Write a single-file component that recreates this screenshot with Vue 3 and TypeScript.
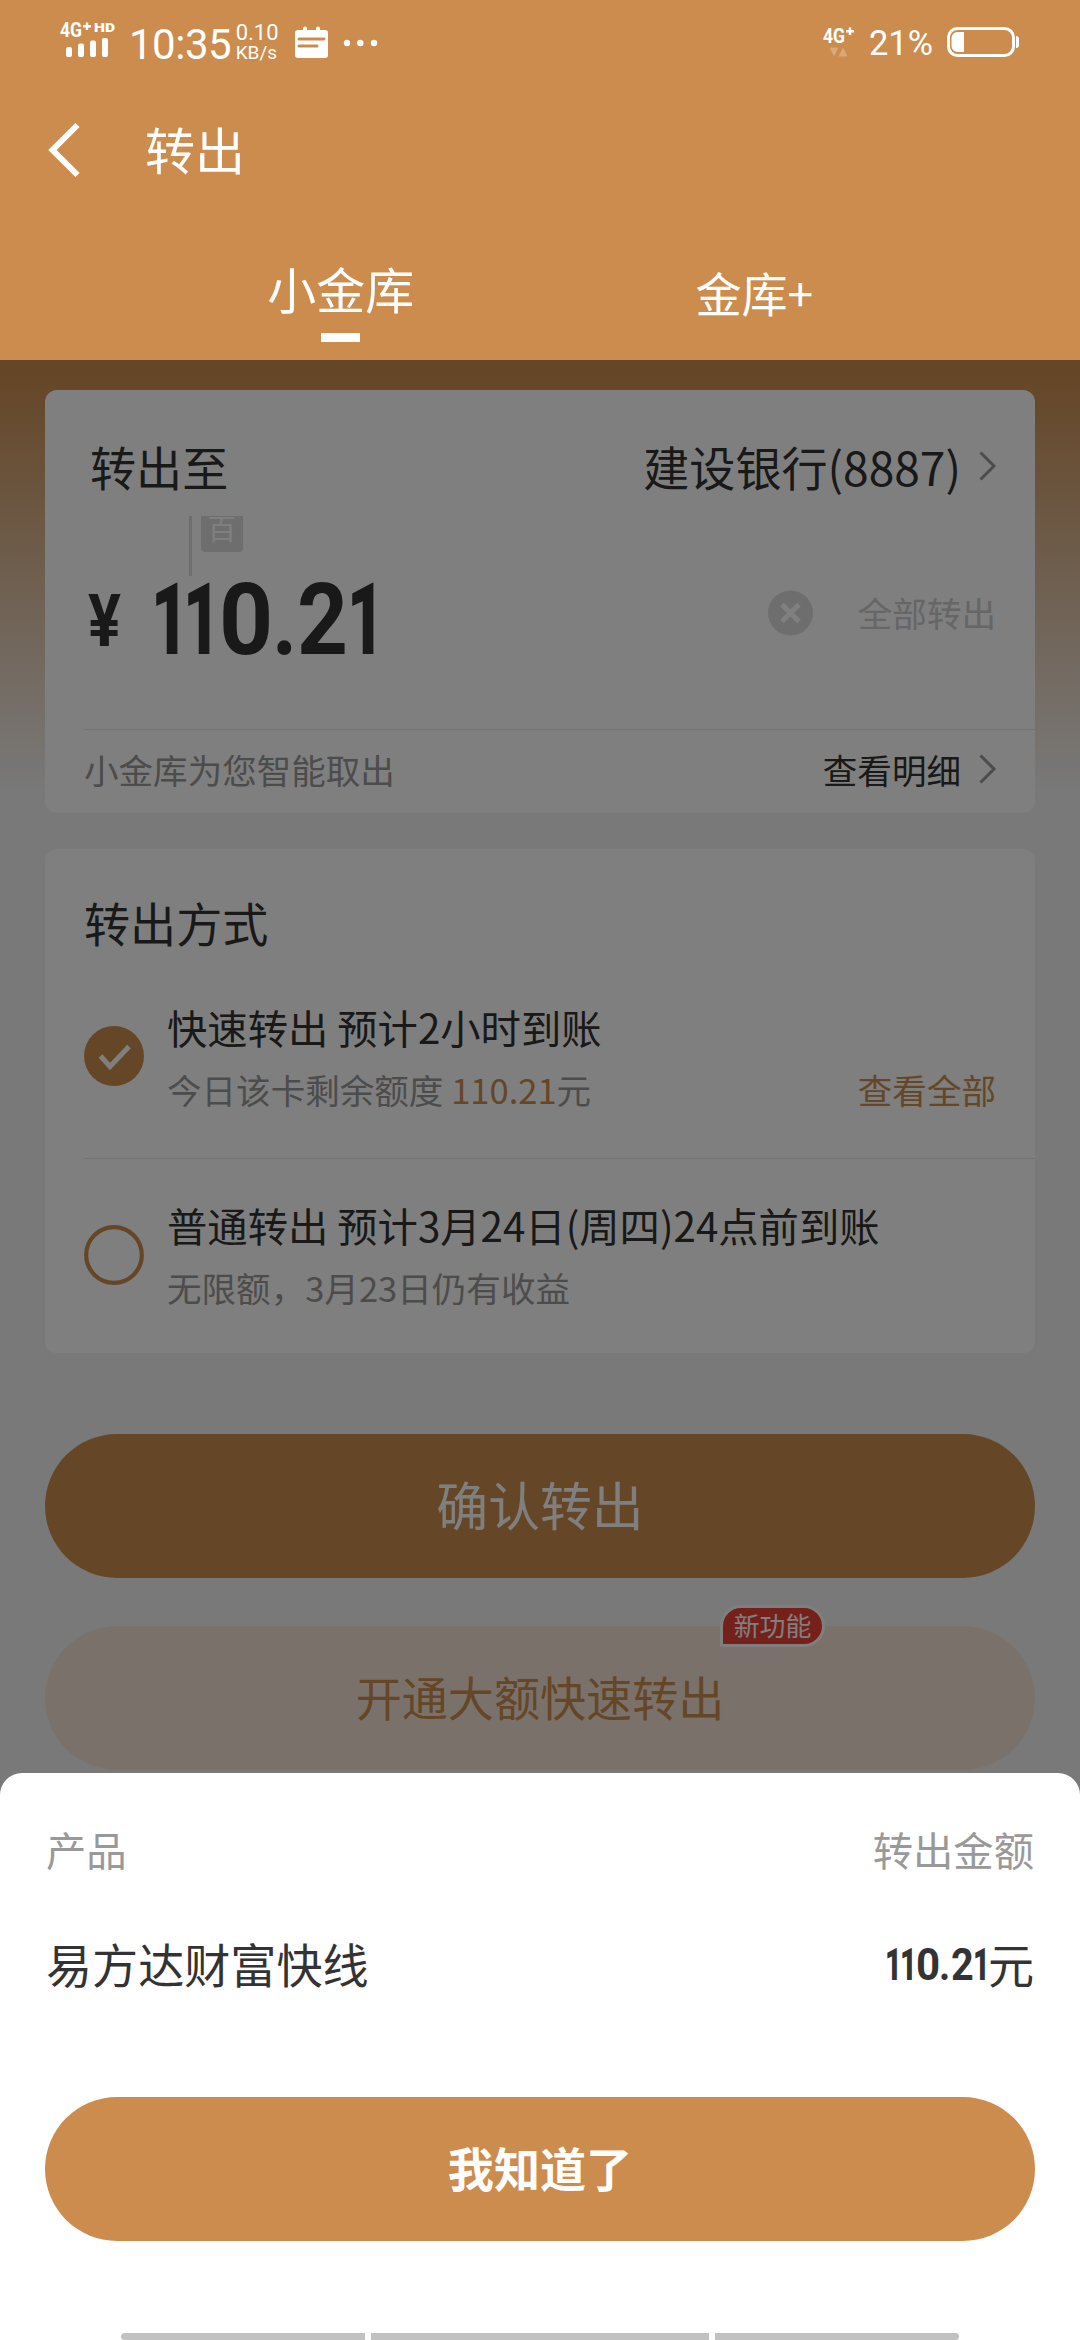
<script setup lang="ts">
import { ref } from 'vue'

interface Tab { key: string; label: string }
interface Method { key: string; title: string; before: string; amount?: string; after?: string; link?: string }

const tabs: Tab[] = [
  { key: 'vault', label: '小金库' },
  { key: 'plus', label: '金库+' },
]
const activeTab = ref('vault')

const methods: Method[] = [
  { key: 'fast', title: '快速转出 预计2小时到账', before: '今日该卡剩余额度 ', amount: '110.21', after: '元', link: '查看全部' },
  { key: 'normal', title: '普通转出 预计3月24日(周四)24点前到账', before: '无限额，3月23日仍有收益' },
]
const selected = ref('fast')

// Each character of the amount carries its own advance and condensing class.
const digits = '110.21'.split('').map((ch, i) => ({ ch, cls: ['d1', 'd1 wide', 'd0', 'dot', 'd2', 'd1 last'][i] }))
</script>

<template>
  <div class="screen">
    <header class="header">
      <div class="status">
        <svg class="signal" width="60" height="40" viewBox="0 0 60 40">
          <text x="1" y="16.500" class="net" textLength="22" lengthAdjust="spacingAndGlyphs">4G</text>
          <path d="M28 2.500v7.500M24 6.200h8" stroke="#fff" stroke-width="2.400" />
          <text x="35" y="12" class="hd" textLength="21" lengthAdjust="spacingAndGlyphs">HD</text>
          <rect x="7" y="27" width="6" height="10" rx="2" />
          <rect x="19" y="23.500" width="6" height="13.500" rx="2" />
          <rect x="31" y="20.500" width="6" height="16.500" rx="2" />
          <rect x="43" y="18" width="6" height="19" rx="2" />
        </svg>
        <span class="time">10:35</span>
        <span class="speed"><span class="rate">0.10</span><span class="unit">KB/s</span></span>
        <svg class="calendar" width="34" height="34" viewBox="0 0 34 34">
          <path fill="#fff" fill-rule="evenodd" d="M3 4h5V2.500a2 2 0 0 1 4 0V4h9V2.500a2 2 0 0 1 4 0V4h5a3 3 0 0 1 3 3v22a3 3 0 0 1-3 3H3a3 3 0 0 1-3-3V7a3 3 0 0 1 3-3zM4 11.500a1.500 1.500 0 0 0 0 3h25a1.500 1.500 0 0 0 0-3zM4 18.500a1.500 1.500 0 0 0 0 3h18a1.500 1.500 0 0 0 0-3z" />
        </svg>
        <svg class="dots" width="36" height="8" viewBox="0 0 36 8">
          <circle cx="4" cy="4" r="3.200" /><circle cx="17.300" cy="4" r="3.200" /><circle cx="31" cy="4" r="3.200" />
        </svg>
        <svg class="network" width="36" height="32" viewBox="0 0 36 32">
          <text x="1" y="16.500" class="net" textLength="22" lengthAdjust="spacingAndGlyphs">4G</text>
          <path d="M28 1.500v7.500M24 5.200h8" stroke="#fff" stroke-width="2.400" />
          <path d="M7.500 21.500h9l-4.500 9zM16.500 30.500h9l-4.500-9z" fill="#fff" opacity=".25" />
        </svg>
        <span class="percent">21%</span>
        <svg class="battery" width="73" height="30" viewBox="0 0 73 30">
          <rect x="1.500" y="1.500" width="65" height="27" rx="9" fill="none" stroke="#fff" stroke-width="3" />
          <path d="M10.500 5H17v20h-6.500a6 6 0 0 1-6-6v-8a6 6 0 0 1 6-6zM69 9a3 3 0 0 1 3 3v6a3 3 0 0 1-3 3z" />
        </svg>
      </div>
      <div class="titlebar">
        <svg width="34" height="56" viewBox="0 0 34 56"><path d="M30.500 3L5.500 28l25 25" fill="none" stroke="#fff" stroke-width="6" /></svg>
        <h1>转出</h1>
      </div>
      <nav class="tabs">
        <button v-for="t in tabs" :key="t.key" :class="['tab', { active: t.key === activeTab }]" @click="activeTab = t.key">{{ t.label }}</button>
      </nav>
    </header>

    <main class="body">
      <section class="card">
        <div class="row target">
          <span class="big">转出至</span>
          <span class="link big">建设银行(8887)<svg width="18" height="30" viewBox="0 0 18 30"><path d="M1.500 1.500L15 15 1.500 28.500" /></svg></span>
        </div>
        <div class="hint"><i></i><span><b>百</b></span></div>
        <div class="row amount">
          <svg width="67" height="90" viewBox="0 0 67 90">
            <text class="yen" x="4" y="70" textLength="33" lengthAdjust="spacingAndGlyphs">¥</text>
          </svg>
          <span class="digits"><span v-for="(d, i) in digits" :key="i" :class="d.cls">{{ d.ch }}</span></span>
          <svg class="clear" width="45" height="46" viewBox="0 0 45 46"><circle cx="22.500" cy="23" r="22.500" fill="#dcdcdc" /><path d="M14 14.500l17 17M31 14.500l-17 17" stroke="#fff" stroke-width="5" /></svg>
          <span class="small all">全部转出</span>
        </div>
        <div class="row detail small">
          <span class="muted">小金库为您智能取出</span>
          <span class="link">查看明细<svg width="18" height="30" viewBox="0 0 18 30"><path d="M1.500 1.500L15 15 1.500 28.500" /></svg></span>
        </div>
      </section>

      <section class="card methods">
        <h2 class="big">转出方式</h2>
        <div v-for="m in methods" :key="m.key" class="method" @click="selected = m.key">
          <svg width="60" height="60" viewBox="0 0 60 60">
            <template v-if="selected === m.key">
              <circle cx="30" cy="30" r="30" fill="#cb8c4d" />
              <path d="M16.500 30l9.500 10.500L45 20.500" fill="none" stroke="#fff" stroke-width="5" />
            </template>
            <circle v-else cx="30" cy="30" r="27.800" fill="none" stroke="#cb8c4d" stroke-width="4.200" />
          </svg>
          <div class="texts">
            <div class="name">{{ m.title }}</div>
            <div class="row small muted">
              <span>{{ m.before }}<em v-if="m.amount">{{ m.amount }}</em>{{ m.after }}</span>
              <em v-if="m.link">{{ m.link }}</em>
            </div>
          </div>
        </div>
      </section>

      <button class="btn primary">确认转出</button>
      <button class="btn secondary">开通大额快速转出<span class="badge">新功能</span></button>
      <div class="mask"></div>
    </main>

    <section class="sheet">
      <div class="row head"><span>产品</span><span>转出金额</span></div>
      <div class="row item">
        <span>易方达财富快线</span>
        <span class="sum"><span class="digits"><span v-for="(d, i) in digits" :key="i" :class="d.cls">{{ d.ch }}</span></span><span class="yuan">元</span></span>
      </div>
      <button class="btn confirm">我知道了</button>
      <div class="gesture"><i></i><i></i><i></i></div>
    </section>
  </div>
</template>

<style>
html, body { margin: 0; overflow: hidden; }
</style>

<style scoped>
* { box-sizing: border-box; }
.screen {
  position: relative;
  width: 1080px;
  height: 2340px;
  overflow: hidden;
  display: flex;
  flex-direction: column;
  font-family: "Noto Sans CJK SC", sans-serif;
  color: #333;
  background: #f2f2f2;
}
h1, h2 { margin: 0; font-weight: 400; }
em, i { font-style: normal; }
button { border: 0; padding: 0; margin: 0; font-family: inherit; cursor: pointer; }
svg { display: block; flex: none; overflow: visible; }
.row { display: flex; justify-content: space-between; align-items: center; }
.big { font-size: 46.08px; line-height: 60px; }
.small { font-size: 34.56px; line-height: 44px; }
.muted { color: #999; }
em { color: #cb8c4d; }

.header { height: 360px; flex: none; background: #cb8c4d; color: #fff; }
.status { height: 88px; display: flex; align-items: flex-start; padding: 0 60px 0 59px; font-family: Roboto, sans-serif; fill: #fff; }
.net { font: 700 20px Roboto, sans-serif; }
.hd { font: 900 13.500px Roboto, sans-serif; }
.signal { margin-top: 20px; }
.time { margin: 20px 0 0 10px; width: 108px; font-size: 42px; line-height: 49px; letter-spacing: -.5px; white-space: nowrap; }
.speed { margin-top: 22px; width: 60px; display: flex; flex-direction: column; }
.rate { font-size: 22px; line-height: 22px; }
.unit { font-size: 19px; line-height: 18px; }
.calendar { margin-top: 26px; }
.dots { margin: 39px 0 0 14px; }
.network { margin: 26px 0 0 443px; }
.percent { margin: 23px 0 0 11px; width: 79px; font-size: 34.500px; line-height: 40px; }
.battery { margin-top: 27px; }
.titlebar { height: 124px; display: flex; align-items: center; padding-left: 47px; }
.titlebar h1 { margin: 0 0 4px 64px; font-size: 50px; line-height: 60px; }
.tabs { display: flex; height: 148px; padding: 0 119px 0 134px; }
.tab { flex: 1; display: flex; flex-direction: column; align-items: center; padding-top: 50px; font-size: 46.08px; line-height: 60px; color: #fff; background: none; }
.tab.active { font-size: 48.96px; padding-top: 46px; }
.tab.active::after { content: ""; width: 39px; height: 9px; margin-top: 15px; background: #fff; }

.body { flex: 1; position: relative; padding: 30px 45px 0; background: linear-gradient(#cb8c4d 10px, #f2f2f2 430px); }
.mask { position: absolute; inset: 0; background: rgba(0, 0, 0, .5); }
.card { height: 423px; margin-bottom: 36px; padding-left: 39px; border-radius: 12px; background: #fff; }
.target { height: 126px; padding: 26px 38px 0 6px; }
.link { display: flex; align-items: center; }
.link svg { margin-left: 18px; fill: none; stroke: #999; stroke-width: 3; }
.hint { display: flex; height: 60px; padding-left: 105px; }
.hint i { width: 3px; height: 60px; background: #dcdcdc; }
.hint span { width: 42px; height: 36px; margin-left: 9px; overflow: hidden; border-radius: 0 0 4px 4px; background: #dcdcdc; color: #fff; text-align: center; }
.hint b { display: block; font-weight: 400; font-size: 28.800px; line-height: 40px; margin-top: -8px; }
.amount { height: 153px; padding-right: 39px; align-items: flex-start; justify-content: flex-start; }
.amount .digits { font-size: 101px; line-height: 87px; }
.yen { font: 700 73px Roboto, sans-serif; fill: #333; }

.digits { display: flex; flex: none; font-family: Roboto, sans-serif; font-weight: 700; }
.digits span { flex: none; transform-origin: 0 50%; }
.digits .d1 { width: .319em; font-weight: 900; transform: scaleX(.64); }
.digits .wide { width: .357em; }
.digits .last { width: .267em; }
.digits .d0 { width: .521em; transform: scaleX(.935); }
.digits .dot { width: .252em; transform: scaleX(.86); }
.digits .d2 { width: .496em; transform: scaleX(.88); }

.clear { margin: 14px 0 0 auto; }
.all { margin: 14px 0 0 45px; color: #ccc; white-space: nowrap; }
.detail { border-top: 1px solid #e8e8e8; height: 79px; padding-right: 38px; }
.detail .link { color: #333; }
.methods { height: 504px; margin-bottom: 81px; }
.methods h2 { padding-top: 43px; height: 111px; }
.method { display: flex; align-items: center; height: 198px; padding-bottom: 6px; }
.method + .method { border-top: 1px solid #e8e8e8; }
.texts { flex: 1; padding: 0 39px 5px 23px; }
.name { font-size: 40.320px; line-height: 60px; }
.texts .row { margin-top: 10px; }
.btn { display: block; width: 990px; height: 144px; border-radius: 72px; text-align: center; font-weight: 400; }
.primary { background: #cb8c4d; color: #fff; font-size: 51.840px; line-height: 140px; padding-bottom: 4px; }
.secondary { position: relative; margin-top: 48px; background: #f4e3d6; color: #cb8c4d; font-size: 46.080px; padding-bottom: 5px; }
.badge { position: absolute; left: 675px; top: -21px; width: 105px; height: 42px; border: 3px solid #fff; border-radius: 21px 21px 21px 0; background: #ea4034; color: #fff; font-size: 25.920px; line-height: 34px; }

.sheet { position: absolute; left: 0; right: 0; bottom: 0; height: 567px; padding: 0 45px; border-radius: 22px 22px 0 0; background: #fff; }
.head { height: 152px; padding: 0 1px; font-size: 40.320px; line-height: 60px; color: #999; }
.item { height: 76px; padding: 0 1px; font-size: 46.080px; line-height: 60px; }
.sum { display: flex; align-items: center; }
.sum .digits { margin: 3px 3px 0 0; font-size: 45px; }
.confirm { margin-top: 96px; background: #cb8c4d; color: #fff; font-size: 46.080px; font-weight: 700; padding-bottom: 5px; }
.gesture { display: flex; gap: 6px; margin: 92px 76px 0; }
.gesture i { width: 244px; height: 7px; background: #c1c1c1; }
.gesture i:nth-child(2) { width: 338px; }
.gesture i:first-child { border-radius: 4px 0 0 4px; }
.gesture i:last-child { border-radius: 0 4px 4px 0; }
</style>
